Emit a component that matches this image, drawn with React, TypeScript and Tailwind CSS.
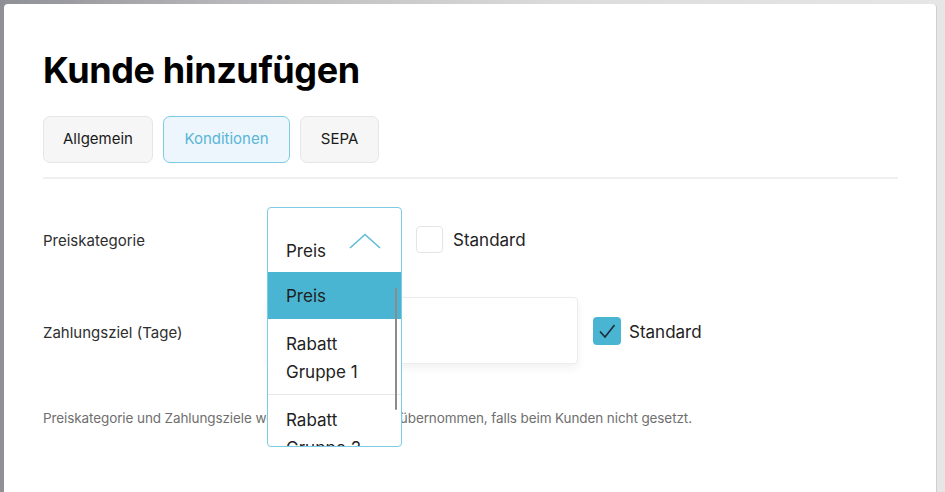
import React from "react";

const font = { fontFamily: "Inter, 'Noto Sans', sans-serif" };

function Tab({ label, active }: { label: string; active?: boolean }) {
  return (
    <div
      className={
        "h-[47px] flex items-center justify-center rounded-[7px] border text-[15px] " +
        (active
          ? "border-[#7ccbe2] bg-[#edf5fd] text-[#5ab6d6]"
          : "border-[#e6e6e6] bg-[#f6f6f6] text-[#1a1a1a]")
      }
    >
      {label}
    </div>
  );
}

export default function App() {
  return (
    <div
      className="w-[945px] h-[492px] overflow-hidden bg-[linear-gradient(to_right,#8f9096,#b9b9bb_25%,#dcdcdc_60%,#e6e6e6)] pt-[4px] pl-[4px]"
      style={font}
    >
      <div className="w-[933px] h-[500px] bg-white rounded-t-[4px] border-r-[1px] border-[#cfcfcf] pl-[39px] pr-[38px] pt-[44px]">
        <h1 className="text-[36px] leading-[44px] font-bold text-black tracking-[-0.4px]">Kunde hinzufügen</h1>

        <div className="mt-[24px] flex gap-[10px]">
          <div className="w-[110px]"><Tab label="Allgemein" /></div>
          <div className="w-[127px]"><Tab label="Konditionen" active /></div>
          <div className="w-[79px]"><Tab label="SEPA" /></div>
        </div>

        <div className="mt-[14px] h-[2px] bg-[#efefef]" />

        <div className="mt-[28px] flex flex-col gap-[26px]">
          {/* Row 1 */}
          <div className="flex items-center h-[64px]">
            <div className="w-[224px] pt-[5px] text-[15px] text-[#2e2e2e]">Preiskategorie</div>
            <div className="relative w-[135px] h-[64px] z-10">
              <div className="absolute left-0 top-0 w-[135px] h-[240px] rounded-[4px] border border-[#7ccbe2] bg-white overflow-hidden flex flex-col">
                <div className="h-[64px] shrink-0 flex items-end justify-between pl-[18px] pr-[20px] pb-[11px]">
                  <span className="text-[17px] text-[#222] leading-[20px]">Preis</span>
                  <svg width="32" height="16" viewBox="0 0 32 16" className="mb-[12px]">
                    <path d="M1 15 L16 1.5 L31 15" fill="none" stroke="#5dbdd9" strokeWidth="1.6" />
                  </svg>
                </div>
                <div className="relative flex-1 overflow-hidden">
                  <div className="h-[47px] bg-[#4ab5d3] flex items-center pt-[2px] pl-[18px] text-[17px] text-[#1f1f1f]">Preis</div>
                  <div className="h-[76px] flex flex-col justify-center pt-[3px] pl-[18px] text-[17px] leading-[28px] text-[#222] border-b border-[#e8e8e8]">
                    <span>Rabatt</span>
                    <span>Gruppe 1</span>
                  </div>
                  <div className="pt-[11px] pl-[18px] text-[17px] leading-[28px] text-[#222] flex flex-col">
                    <span>Rabatt</span>
                    <span>Gruppe 2</span>
                  </div>
                  <div className="absolute right-[4px] top-[16px] w-[2px] h-[122px] bg-[#8c8c8c] rounded" />
                </div>
              </div>
            </div>
            <div className="ml-[14px] w-[27px] h-[27px] rounded-[4px] border border-[#e4e4e4] bg-white" />
            <span className="ml-[10px] pt-[4px] text-[17px] text-[#222]">Standard</span>
          </div>

          {/* Row 2 */}
          <div className="flex items-center h-[67px]">
            <div className="w-[224px] pt-[5px] text-[15px] text-[#2e2e2e]">Zahlungsziel (Tage)</div>
            <div className="w-[311px] h-[67px] rounded-[4px] border border-[#ececec] bg-white shadow-[0_4px_8px_rgba(0,0,0,0.06)]" />
            <div className="ml-[15px] w-[28px] h-[28px] rounded-[4px] bg-[#4ab5d3] flex items-center justify-center">
              <svg width="20" height="20" viewBox="0 0 20 20">
                <path d="M3 10.5 L8 16 L17.5 4" fill="none" stroke="#1f2a38" strokeWidth="1.6" />
              </svg>
            </div>
            <span className="ml-[8px] pt-[4px] text-[17px] text-[#222]">Standard</span>
          </div>
        </div>

        <p className="mt-[44px] text-[13.5px] tracking-[-0.1px] text-[#6f6f6f]">
          Preiskategorie und Zahlungsziele werden aus dem Profil übernommen, falls beim Kunden nicht gesetzt.
        </p>
      </div>
    </div>
  );
}
